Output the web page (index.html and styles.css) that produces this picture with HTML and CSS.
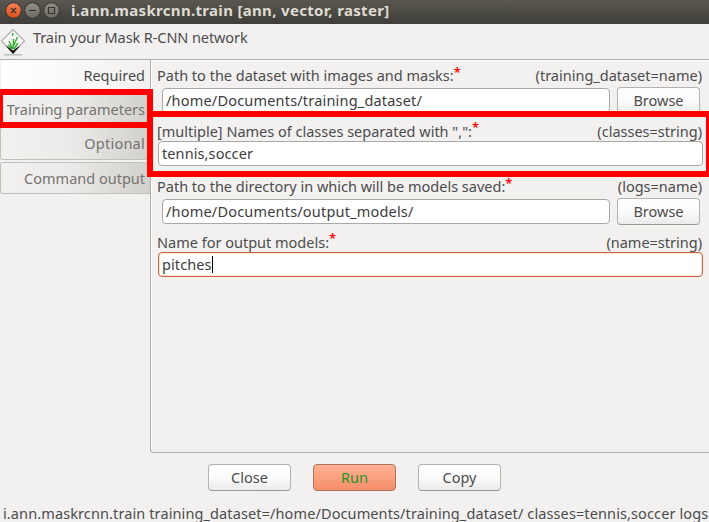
FILE: index.html
```
<!DOCTYPE html>
<html lang="en">
<head>
<meta charset="utf-8">
<title>i.ann.maskrcnn.train [ann, vector, raster]</title>
<link rel="stylesheet" href="styles.css">
</head>
<body>
<header class="titlebar">
  <svg class="controls" width="64" height="24" viewBox="0 0 64 24">
    <defs>
      <linearGradient id="close" x2="0" y2="1"><stop stop-color="#f68156"/><stop offset="1" stop-color="#df4d1c"/></linearGradient>
      <linearGradient id="grey" x2="0" y2="1"><stop stop-color="#918f87"/><stop offset="1" stop-color="#6b6962"/></linearGradient>
    </defs>
    <g stroke="#33322d">
      <circle cx="13.5" cy="10.5" r="7.8" fill="url(#close)"/>
      <circle cx="32.5" cy="10.5" r="7.8" fill="url(#grey)"/>
      <circle cx="51.5" cy="10.5" r="7.8" fill="url(#grey)"/>
    </g>
    <path d="M11 8l5 5M16 8l-5 5M29 10.500h7M48.500 7.500h6v6h-6z" fill="none" stroke="#35342f" stroke-width="1.2"/>
  </svg>
  <h1>i.ann.maskrcnn.train [ann, vector, raster]</h1>
</header>
<div class="intro">
  <svg class="logo" width="26" height="28" viewBox="0 0 26 28">
    <path d="M4 26.800h18" stroke="#b9b9b9" stroke-width="1.4"/>
    <path d="M13 1.500L24.500 13 13 25 1.500 13z" fill="#f6f6f5" stroke="#b0b0b0" stroke-width="1.2"/>
    <path d="M5.500 17.500l7.500 8.500 7.500-8.500-5 3-2.500 2-2.500-2z" fill="#111"/>
    <path d="M12.500 21L9 13M13 21l.5-10M13 19l4.500-10M14 21l4-6M12 21l-4-4M12.500 8l.5-3" fill="none" stroke="#36a832" stroke-width="1.4"/>
  </svg>
  <p>Train your Mask R-CNN network</p>
</div>
<main class="notebook">
  <nav class="tabs">
    <div class="tab active">Required</div>
    <div class="tab">Training parameters</div>
    <div class="tab optional">Optional</div>
    <div class="tab">Command output</div>
  </nav>
  <section class="page">
    <div class="label file">Path to the dataset with images and masks:<sup>*</sup><span class="key">(training_dataset=name)</span></div>
    <div class="filerow"><div class="input">/home/Documents/training_dataset/</div><div class="button">Browse</div></div>
    <div class="label">[multiple] Names of classes separated with ",":<sup>*</sup><span class="key">(classes=string)</span></div>
    <div class="input">tennis,soccer</div>
    <div class="label file spaced">Path to the directory in which will be models saved:<sup>*</sup><span class="key">(logs=name)</span></div>
    <div class="filerow"><div class="input">/home/Documents/output_models/</div><div class="button">Browse</div></div>
    <div class="label">Name for output models:<sup>*</sup><span class="key">(name=string)</span></div>
    <div class="input focused">pitches<i class="caret"></i></div>
  </section>
</main>
<div class="actions">
  <div class="button">Close</div>
  <div class="button run">Run</div>
  <div class="button">Copy</div>
</div>
<footer class="status">i.ann.maskrcnn.train training_dataset=/home/Documents/training_dataset/ classes=tennis,soccer logs</footer>
<div class="mark mark-tab"></div>
<div class="mark mark-field"></div>
</body>
</html>
```
FILE: styles.css
```
* { box-sizing: border-box; }
body {
  margin: 0;
  width: 709px;
  height: 522px;
  overflow: hidden;
  position: relative;
  display: flex;
  flex-direction: column;
  background: #f2f1f0;
  color: #4c4c4c;
  font: 14.5px/20px "Noto Sans", "Open Sans", sans-serif;
  white-space: nowrap;
}
.titlebar {
  height: 24px;
  flex: none;
  display: flex;
  background: linear-gradient(#59574f, #3e3d38);
}
.controls { flex: none; }
h1 {
  margin: 0 0 0 7px;
  font-size: 15px;
  letter-spacing: 0.32px;
  line-height: 21px;
  font-weight: 700;
  color: #dfdbd2;
}
.intro {
  height: 35px;
  flex: none;
  display: flex;
}
.logo { margin: 4px 0 0; flex: none; }
.intro p { margin: 3px 0 0 7px; letter-spacing: -0.09px; }
.notebook {
  height: 394px;
  flex: none;
  display: flex;
  border-top: 1px solid #b2b0ad;
}
.tabs {
  width: 150px;
  flex: none;
  display: flex;
  flex-direction: column;
  gap: 2px;
  margin-top: -1px;
}
.tab {
  height: 32px;
  padding-right: 5px;
  text-align: right;
  line-height: 31px;
  color: #757370;
  border: 1px solid #c2c0bd;
  border-right: 0;
  border-radius: 3px 0 0 3px;
  background: linear-gradient(90deg, #f2f1f0 0, #ecebe9 45%, #d2d0cc 100%);
}
.tab.active {
  color: #4c4c4c;
  border-color: #b2b0ad transparent transparent;
  background: linear-gradient(90deg, #fff, #f2f1f0);
}
.tab.optional { height: 33px; letter-spacing: 0.25px; }
.page {
  flex: 1;
  padding: 5px 6px 0 7px;
  border-left: 1px solid #b2b0ad;
  border-bottom: 1px solid #b2b0ad;
  border-radius: 0 0 0 4px;
  box-shadow: inset 1px 1px #fbfbfa;
}
.label {
  display: flex;
  height: 21px;
  line-height: 23px;
  margin: 0 1px 0 -1px;
}
.label.file { height: 22px; line-height: 20px; }
.label.spaced { margin-top: 10px; }
.label sup {
  color: #f00;
  font-size: 13px;
  font-weight: 600;
  line-height: 14px;
}
.label .key { margin-left: auto; }
.filerow {
  display: flex;
  gap: 7px;
  height: 33px;
  padding: 0 3px 0 4px;
}
.filerow .input { flex: 1; margin-top: 1px; letter-spacing: 0.19px; }
.input {
  display: flex;
  align-items: center;
  height: 25px;
  padding: 0 0 2px 3px;
  letter-spacing: 0.1px;
  color: #3c3c3c;
  background: #fff;
  border: 1px solid #aaa8a5;
  border-radius: 4px;
}
.input.focused { border-color: #d0623c; box-shadow: inset 0 0 0 1px #fae5dd; }
.caret { width: 1px; height: 17px; margin-top: 2px; background: #000; }
.button {
  width: 83px;
  height: 27px;
  line-height: 25px;
  text-align: center;
  border: 1px solid #b5b3b0;
  border-bottom-color: #9c9a97;
  border-radius: 4px;
  background: linear-gradient(#fff, #fbfbfb 50%, #ecebea);
}
.button.run {
  color: #27952a;
  border-color: #a9745f;
  background: linear-gradient(#ffb093, #f58f68);
}
.actions {
  display: flex;
  gap: 22px;
  margin: 11px 0 0 208px;
}
.status { margin: 12px 0 0 3px; letter-spacing: 0.11px; }
.mark { position: absolute; border: 6px solid #f00; }
.mark-tab { left: 0; top: 89px; width: 153px; height: 39px; border-left-width: 3px; }
.mark-field { left: 147px; top: 111px; width: 562px; height: 66px; border-right-width: 3px; }
```
